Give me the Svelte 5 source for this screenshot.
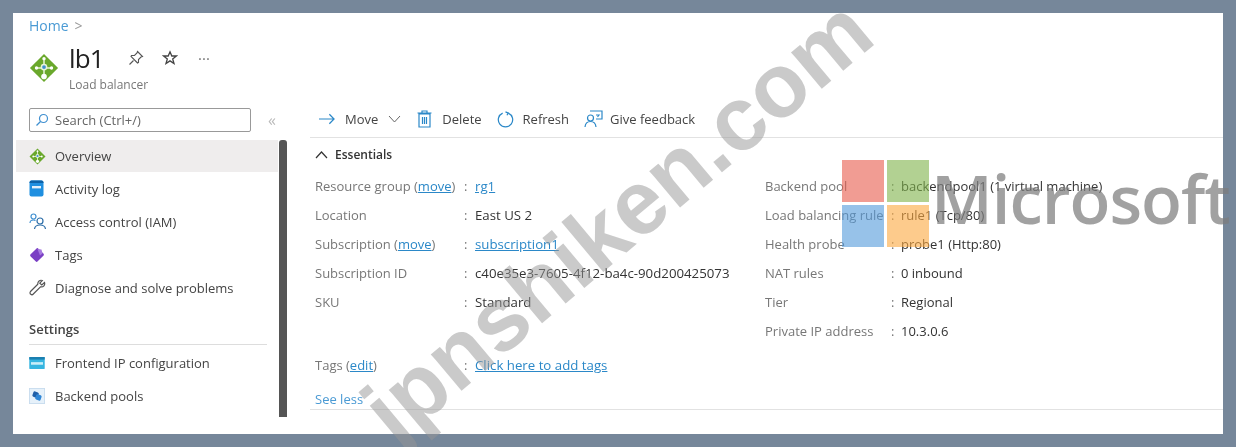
<script>
  const nav = [
    { label: "Activity log", icon: "log" },
    { label: "Access control (IAM)", icon: "iam" },
    { label: "Tags", icon: "tag" },
    { label: "Diagnose and solve problems", icon: "wrench" },
  ];

  const right = [
    ["Backend pool", "backendpool1 (1 virtual machine)"],
    ["Load balancing rule", "rule1 (Tcp/80)"],
    ["Health probe", "probe1 (Http:80)"],
    ["NAT rules", "0 inbound"],
    ["Tier", "Regional"],
    ["Private IP address", "10.3.0.6"],
  ];
</script>

{#snippet lbIcon(size)}
  <svg width={size} height={size} viewBox="0 0 32 32">
    <path d="M16 1 31 16 16 31 1 16Z" fill="#6aa82c" />
    <path d="M16 6v6M8 16h16M16 16v10" stroke="#e8f3d8" stroke-width="1.6" fill="none" />
    <circle cx="16" cy="15" r="3.6" fill="#e8f3d8" />
    <circle cx="16" cy="15" r="2" fill="#3f8fd0" />
    <circle cx="16" cy="25" r="3" fill="#fff" />
    <circle cx="8" cy="16" r="1.8" fill="#fff" />
    <circle cx="24" cy="16" r="1.8" fill="#fff" />
    <circle cx="16" cy="6" r="1.8" fill="#fff" />
  </svg>
{/snippet}

<div class="page">
  <div class="panel">
    <div class="crumb"><span class="link">Home</span><span class="sep">&gt;</span></div>

    <header class="title">
      {@render lbIcon(30)}
      <div class="names">
        <div class="name-row">
          <h1>lb1</h1>
          <svg class="pin" width="16" height="16" viewBox="0 0 16 16" fill="none" stroke="#555" stroke-width="1.1">
            <path d="M9.5 1.5 14.5 6.5 13 7 10.5 9.5 10.5 12.5 9.5 13 3 6.5 3.5 5.5 6.5 5.5 9 3Z" />
            <path d="M5.5 10.5 1.5 14.5" />
          </svg>
          <svg class="star" width="16" height="16" viewBox="0 0 16 16" fill="none" stroke="#444" stroke-width="1.3">
            <path d="M8 1.8 9.8 6H14.4L10.7 8.9 12 13.6 8 10.9 4 13.6 5.3 8.9 1.6 6H6.2Z" />
          </svg>
          <span class="more">···</span>
        </div>
        <div class="kind">Load balancer</div>
      </div>
    </header>

    <div class="body">
      <aside class="side">
        <div class="nav">
          <div class="search-row">
            <div class="search">
              <svg width="14" height="14" viewBox="0 0 14 14" fill="none" stroke="#3f8fd0" stroke-width="1.2">
                <circle cx="8.5" cy="5.5" r="4" />
                <path d="M5.5 8.5 1.5 12.5" />
              </svg>
              <span>Search (Ctrl+/)</span>
            </div>
            <span class="collapse">«</span>
          </div>

          <div class="item active">
            <span class="ico">{@render lbIcon(17)}</span>
            <span>Overview</span>
          </div>

          {#each nav as n}
            <div class="item">
              <span class="ico">
                {#if n.icon == "log"}
                  <svg width="15" height="17" viewBox="0 0 15 17">
                    <rect x="0.5" y="0.5" width="14" height="16" rx="2" fill="#1f8fe0" />
                    <path d="M0.5 3V2.500a2 2 0 0 1 2-2H12.500a2 2 0 0 1 2 2V3Z" fill="#0d62a8" />
                    <rect x="3" y="6" width="9" height="2.4" fill="#e4f1fb" />
                  </svg>
                {:else if n.icon == "iam"}
                  <svg width="18" height="17" viewBox="0 0 18 17" fill="none" stroke="#3f8fd0" stroke-width="1.2">
                    <circle cx="4.5" cy="3.5" r="2.5" />
                    <path d="M1 10c0-2 1.5-3 3.5-3 1 0 1.6.2 2 .5" />
                    <circle cx="11" cy="8" r="3" stroke="#2d6ea8" />
                    <path d="M5.5 16c.3-2.5 2.5-4 5.5-4s5.200 1.500 5.500 4" stroke="#2d6ea8" />
                  </svg>
                {:else if n.icon == "tag"}
                  <svg width="16" height="16" viewBox="0 0 16 16">
                    <rect x="2.500" y="3" width="11" height="10" rx="1.500" fill="#7a3fc4" transform="rotate(-45 8 8)" />
                    <path d="M8.500 2 12.500 2.500 13.500 6.500 11 8.500Z" fill="#a77ae0" />
                  </svg>
                {:else}
                  <svg width="17" height="17" viewBox="0 0 17 17" fill="none" stroke="#555" stroke-width="1.2">
                    <path d="M15.500 3.500 12.800 6 10.800 4.200 13.300 1.500C11 .7 8.500 2.200 8.800 5.200L1.500 12.500C.7 13.500 1 14.800 1.800 15.300 2.600 15.900 3.700 15.700 4.300 15L11.500 7.800C14.500 8.300 16.300 6 15.500 3.500Z" />
                  </svg>
                {/if}
              </span>
              <span>{n.label}</span>
            </div>
          {/each}

          <div class="group">Settings</div>

          <div class="item">
            <span class="ico">
              <svg width="16" height="12" viewBox="0 0 18 14">
                <rect width="18" height="14" rx="1" fill="#35b5e0" />
                <rect y="0" width="18" height="3" fill="#1b7fb0" />
                <rect x="2" y="6" width="14" height="3" fill="#c9eef9" />
              </svg>
            </span>
            <span>Frontend IP configuration</span>
          </div>
          <div class="item">
            <span class="ico">
              <svg width="16" height="16" viewBox="0 0 17 17">
                <rect x="0.500" y="0.500" width="16" height="16" fill="#e6f1fa" stroke="#c8dcee" />
                <rect x="4" y="4" width="6" height="6" rx="1.500" fill="#1f5fa8" transform="rotate(20 7 7)" />
                <rect x="7" y="7" width="6" height="6" rx="1.500" fill="#2f86d6" transform="rotate(20 10 10)" />
              </svg>
            </span>
            <span>Backend pools</span>
          </div>
        </div>
        <div class="scroll"></div>
      </aside>

      <main class="main">
        <div class="toolbar">
          <div class="btn">
            <svg width="16" height="12" viewBox="0 0 17 12" fill="none" stroke="#2b88c8" stroke-width="1.300">
              <path d="M0 6H16M11 1 16 6 11 11" />
            </svg>
            <span>Move</span>
            <svg class="chev" width="13" height="8" viewBox="0 0 13 8" fill="none" stroke="#666">
              <path d="M1 1 6.500 7 12 1" />
            </svg>
          </div>
          <div class="btn">
            <svg width="15" height="18" viewBox="0 0 15 18" fill="none" stroke="#2b88c8" stroke-width="1.200">
              <path d="M2 4H13V17H2ZM0.500 3H14.500M5 3V1H10V3M5.500 7V14M7.500 7V14M9.500 7V14" />
            </svg>
            <span>Delete</span>
          </div>
          <div class="btn refresh">
            <svg width="17" height="17" viewBox="0 0 18 18" fill="none" stroke="#2b88c8" stroke-width="1.300">
              <path d="M6 2.200A7.600 7.600 0 1 0 12 2.200" />
              <path d="M9 1 12 2.200 10.500 4.500" />
            </svg>
            <span>Refresh</span>
          </div>
          <div class="btn fb">
            <svg width="19" height="18" viewBox="0 0 19 18" fill="none" stroke="#2b88c8" stroke-width="1.200">
              <path d="M6 1H18V9H12" />
              <circle cx="6.500" cy="8" r="3" />
              <path d="M1 17C1.300 13.500 3.500 11.500 6.500 11.500S11.700 13.500 12 17M12 5 15 5 13.500 7" />
            </svg>
            <span>Give feedback</span>
          </div>
        </div>

        <div class="ess-head">
          <svg width="13" height="8" viewBox="0 0 13 8" fill="none" stroke="#333" stroke-width="1.200">
            <path d="M1 7 6.500 1 12 7" />
          </svg>
          <span>Essentials</span>
        </div>

        <div class="ess">
          <div class="col left">
            <span class="k">Resource group (<a href="#m">move</a>)</span><span class="c">:</span><a class="v" href="#r">rg1</a>
            <span class="k">Location</span><span class="c">:</span><span class="v">East US 2</span>
            <span class="k">Subscription (<a href="#m">move</a>)</span><span class="c">:</span><a class="v" href="#s">subscription1</a>
            <span class="k">Subscription ID</span><span class="c">:</span><span class="v">c40e35e3-7605-4f12-ba4c-90d200425073</span>
            <span class="k">SKU</span><span class="c">:</span><span class="v">Standard</span>
          </div>
          <div class="col right">
            {#each right as r}
              <span class="k">{r[0]}</span><span class="c">:</span><span class="v">{r[1]}</span>
            {/each}
          </div>
        </div>

        <div class="tags">
          <span class="k">Tags (<a href="#e">edit</a>)</span><span class="c">:</span><a class="v" href="#t">Click here to add tags</a>
        </div>

        <div class="less"><span class="link">See less</span></div>
      </main>
    </div>
  </div>

  <div class="mark">jpnshiken.com</div>

  <div class="ms">
    <div class="squares">
      <i class="r"></i><i class="g"></i><i class="b"></i><i class="y"></i>
    </div>
    <span>Microsoft</span>
  </div>
</div>

<style>
  :global(body) {
    margin: 0;
    background: #76879a;
  }

  .page {
    position: relative;
    width: 1236px;
    height: 447px;
    padding: 13px;
    box-sizing: border-box;
    overflow: hidden;
    font-family: "Open Sans", "Noto Sans", sans-serif;
    font-size: 13px;
    color: #444;
  }

  .panel {
    height: 421px;
    background: #fff;
    overflow: hidden;
    filter: blur(0.6px);
  }

  a {
    color: #2b88c8;
  }

  .link {
    color: #4a9ad4;
  }

  .crumb {
    display: flex;
    gap: 6px;
    padding: 4px 0 0 16px;
    line-height: 17px;
    font-size: 14px;
  }

  .sep {
    color: #999;
  }

  .title {
    display: flex;
    align-items: flex-start;
    gap: 10px;
    padding: 12px 0 0 16px;
    height: 58px;
  }

  .title > svg {
    margin-top: 7px;
  }

  .names {
    margin-top: -4px;
  }

  .name-row {
    display: flex;
    align-items: center;
    height: 32px;
  }

  h1 {
    margin: 0 25px 0 0;
    font-size: 26px;
    font-weight: 500;
    color: #222;
    letter-spacing: -0.8px;
    width: 34px;
  }

  .star {
    margin-left: 18px;
  }

  .more {
    margin-left: 20px;
    color: #777;
    font-size: 15px;
  }

  .kind {
    font-size: 12px;
    color: #777;
    line-height: 16px;
    margin-top: 3px;
  }

  .body {
    display: flex;
    margin-top: 4px;
  }

  .side {
    position: relative;
    width: 274px;
    flex: none;
    height: 309px;
  }

  .nav {
    padding-left: 3px;
    width: 262px;
  }

  .search-row {
    position: relative;
    height: 32px;
  }

  .search {
    display: flex;
    align-items: center;
    gap: 6px;
    margin-left: 13px;
    width: 215px;
    height: 22px;
    border: 1px solid #999;
    border-radius: 2px;
    padding-left: 5px;
    color: #666;
  }

  .collapse {
    position: absolute;
    left: 252px;
    top: 0;
    color: #bbb;
    font-size: 16px;
    line-height: 24px;
  }

  .item {
    display: flex;
    align-items: center;
    height: 33px;
    padding-left: 13px;
  }

  .item.active {
    height: 32px;
    background: #efeded;
  }

  .ico {
    display: flex;
    width: 26px;
    flex: none;
  }

  .group {
    margin: 16px 11px 1px 13px;
    padding-bottom: 6px;
    height: 18px;
    line-height: 18px;
    font-weight: 600;
    border-bottom: 1px solid #ddd;
  }

  .scroll {
    position: absolute;
    top: 32px;
    right: 0;
    bottom: 0;
    width: 8px;
    background: #555;
    border-radius: 3px 3px 0 0;
  }

  .main {
    flex: 1;
    margin-left: 23px;
    min-width: 0;
  }

  .toolbar {
    display: flex;
    align-items: center;
    gap: 16px;
    height: 30px;
    padding: 0 0 7px 9px;
    box-sizing: border-box;
    border-bottom: 1px solid #e2e2e2;
  }

  .btn {
    display: flex;
    align-items: center;
    gap: 10px;
  }

  .btn.refresh {
    gap: 9px;
    margin-left: -1px;
  }

  .btn.fb {
    gap: 7px;
    margin-left: -1px;
  }

  .ess-head {
    display: flex;
    align-items: center;
    gap: 7px;
    padding: 8px 0 0 5px;
    height: 26px;
    box-sizing: border-box;
    line-height: 18px;
    font-weight: 600;
    font-size: 12px;
    color: #333;
  }

  .ess {
    display: flex;
    margin-top: 7px;
    height: 174px;
  }

  .col {
    display: grid;
    grid-auto-rows: 29px;
    align-items: center;
  }

  .left {
    grid-template-columns: 149px 11px 1fr;
    width: 450px;
    padding-left: 5px;
    box-sizing: border-box;
  }

  .right {
    grid-template-columns: 126px 10px 1fr;
    padding-left: 5px;
  }

  .k, .c {
    color: #777;
  }

  .v {
    color: #333;
    font-size: 13.25px;
  }

  .right .v {
    font-size: 13px;
  }

  a.v {
    color: #2b88c8;
  }

  .tags {
    display: grid;
    grid-template-columns: 149px 11px 1fr;
    padding-left: 5px;
    height: 29px;
    align-items: center;
    margin-top: 5px;
  }

  .less {
    display: flex;
    align-items: center;
    padding-left: 5px;
    height: 21px;
    margin-top: 9px;
    border-bottom: 1px solid #e2e2e2;
  }

  /* overlays: stamped over the screenshot */
  .mark {
    position: absolute;
    left: 257px;
    top: 176px;
    width: 720px;
    text-align: center;
    font-family: "Liberation Sans", sans-serif;
    font-weight: 700;
    font-size: 90px;
    line-height: 88px;
    color: rgba(150, 150, 150, 0.5);
    transform: rotate(-40deg);
    white-space: nowrap;
  }

  .ms {
    position: absolute;
    left: 842px;
    top: 160px;
    display: flex;
    gap: 2px;
    color: rgba(125, 125, 125, 0.72);
    font-size: 67px;
    font-weight: 600;
    letter-spacing: -1px;
    line-height: 76px;
    white-space: nowrap;
  }

  .squares {
    display: grid;
    grid-template-columns: 42px 42px;
    grid-template-rows: 42px 42px;
    gap: 3px;
    flex: none;
  }

  .squares i {
    opacity: 0.6;
  }

  .r { background: #e85a4b; }
  .g { background: #7fb24a; }
  .b { background: #529adb; }
  .y { background: #fca93f; }
</style>
